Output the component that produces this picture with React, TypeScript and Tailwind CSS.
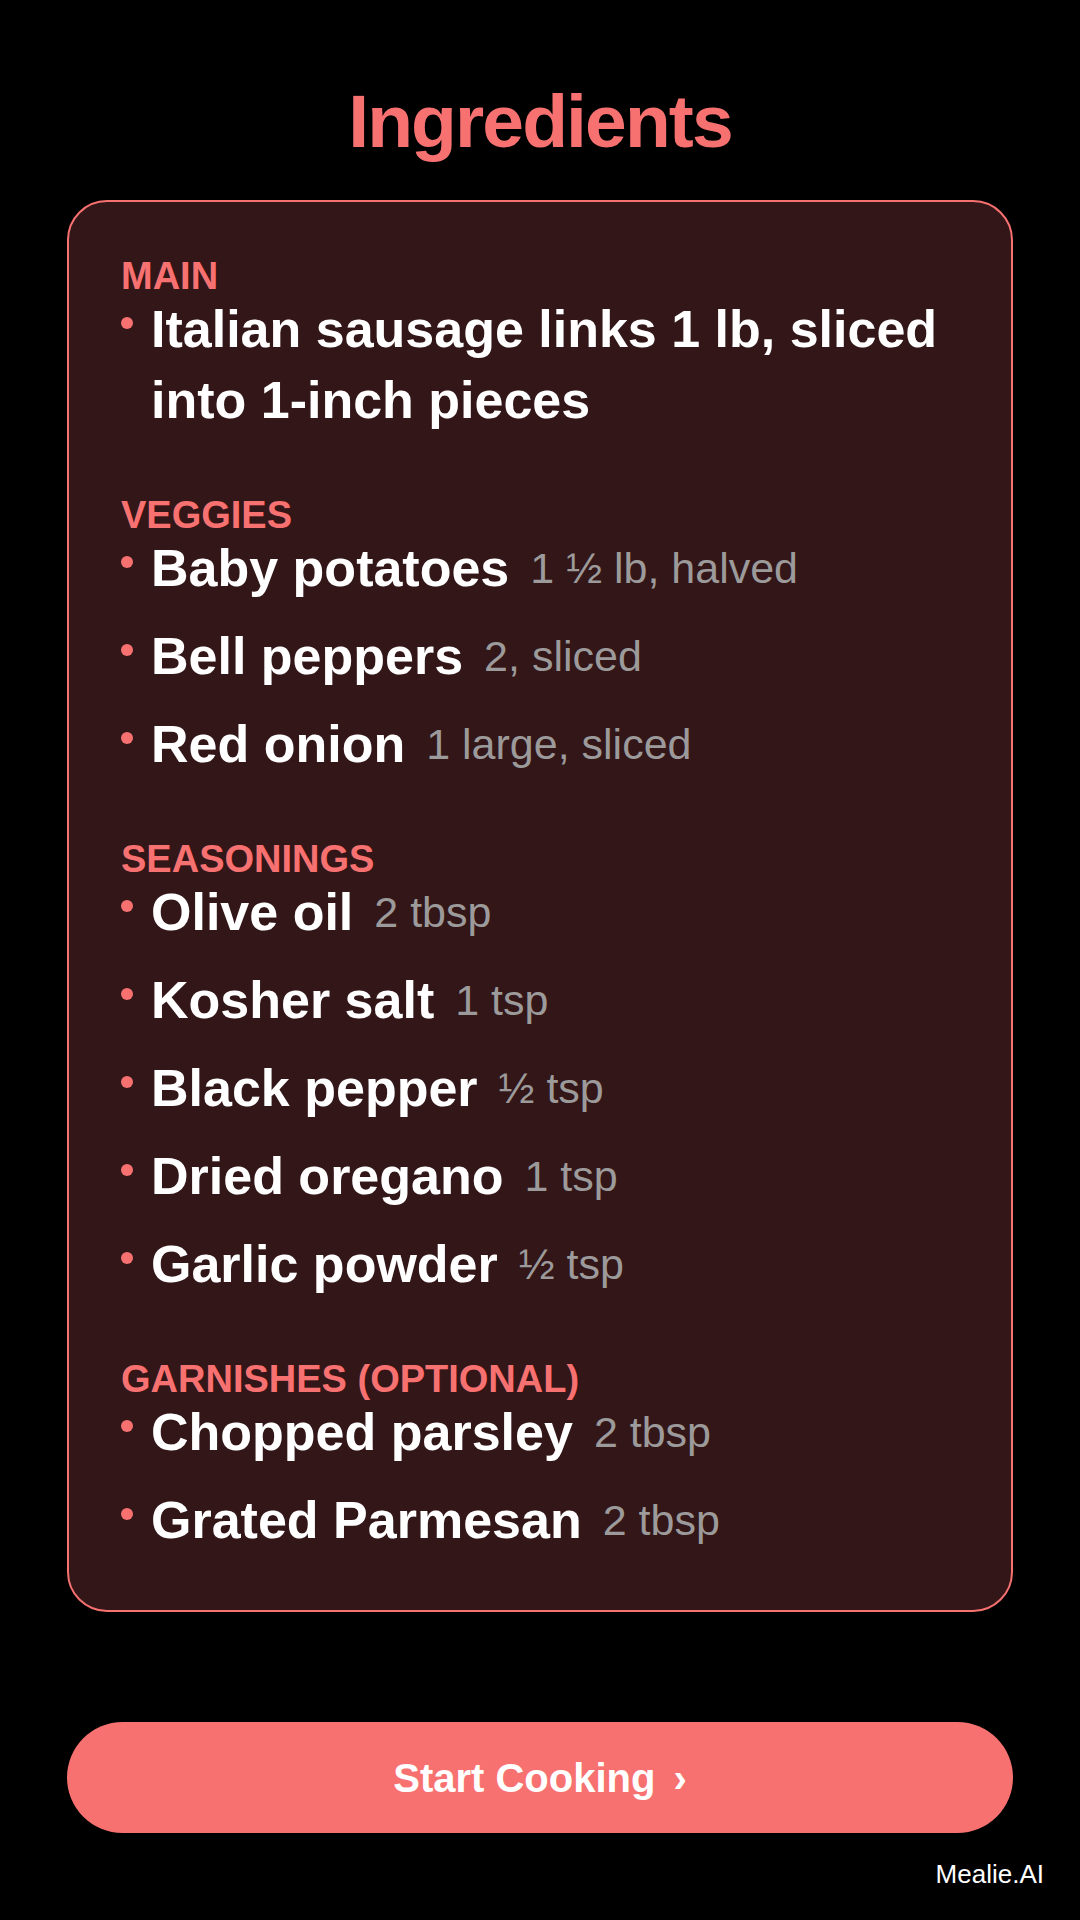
import React from 'react'

type Item = { name: string; qty?: string }
type Section = { title: string; items: Item[] }

const sections: Section[] = [
  {
    title: 'MAIN',
    items: [{ name: 'Italian sausage links 1 lb, sliced into 1-inch pieces' }],
  },
  {
    title: 'VEGGIES',
    items: [
      { name: 'Baby potatoes', qty: '1 ½ lb, halved' },
      { name: 'Bell peppers', qty: '2, sliced' },
      { name: 'Red onion', qty: '1 large, sliced' },
    ],
  },
  {
    title: 'SEASONINGS',
    items: [
      { name: 'Olive oil', qty: '2 tbsp' },
      { name: 'Kosher salt', qty: '1 tsp' },
      { name: 'Black pepper', qty: '½ tsp' },
      { name: 'Dried oregano', qty: '1 tsp' },
      { name: 'Garlic powder', qty: '½ tsp' },
    ],
  },
  {
    title: 'GARNISHES (OPTIONAL)',
    items: [
      { name: 'Chopped parsley', qty: '2 tbsp' },
      { name: 'Grated Parmesan', qty: '2 tbsp' },
    ],
  },
]

export default function App() {
  return (
    <div
      className="flex min-h-[1920px] w-[1080px] flex-col bg-black px-[67px] pt-[81px]"
      style={{ fontFamily: '"Liberation Sans", Arial, sans-serif' }}
    >
      <h1 className="text-center text-[75px] font-bold leading-[80px] tracking-[-0.025em] text-[#f87171]">
        Ingredients
      </h1>

      {/* Ingredient card */}
      <div className="mt-[39px] flex flex-col gap-[62px] rounded-[40px] border-2 border-[#f87171] bg-[#331618] pb-[54px] pl-[52px] pr-[40px] pt-[57px]">
        {sections.map((section) => (
          <div key={section.title}>
            <div className="text-[38px] font-bold leading-[35px] text-[#f87171]">
              {section.title}
            </div>
            <ul className="flex flex-col gap-[17px]">
              {section.items.map((item) => (
                <li key={item.name} className="flex items-start gap-[18px]">
                  <span className="mt-[23px] h-[12px] w-[12px] shrink-0 rounded-full bg-[#f87171]" />
                  <div className="flex flex-wrap items-center gap-x-[21px]">
                    <span className="text-[52px] font-bold leading-[71px] text-white">
                      {item.name}
                    </span>
                    {item.qty && (
                      <span className="text-[43px] leading-[71px] text-[#9c9a9a]">
                        {item.qty}
                      </span>
                    )}
                  </div>
                </li>
              ))}
            </ul>
          </div>
        ))}
      </div>

      <button className="mt-[110px] flex h-[111px] w-full items-center justify-center rounded-full bg-[#f87171] text-[40px] font-bold text-white">
        Start Cooking
        <span className="ml-[18px]">›</span>
      </button>

      <div className="-mr-[31px] mt-[26px] text-right text-[26px] leading-[30px] text-white">
        Mealie.AI
      </div>
    </div>
  )
}
